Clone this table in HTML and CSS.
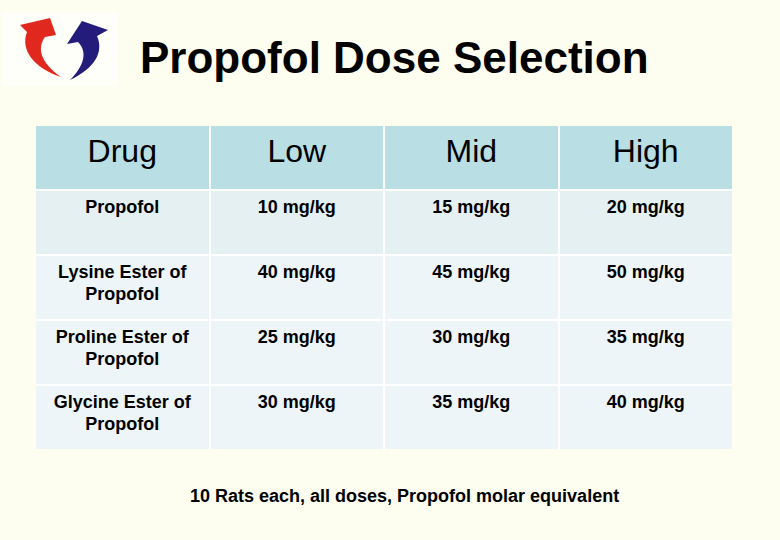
FILE: index.html
```html
<!DOCTYPE html>
<html>
<head>
<meta charset="utf-8">
<link rel="stylesheet" href="styles.css">
</head>
<body>
<div class="slide">
  <header class="top">
    <div class="logo">
      <svg width="116" height="74" viewBox="2 12 116 74">
        <path d="M50,18 L56,35 L45,37 C37,48 40,62 61,77 C34,68 20,50 27,32 L20,25 Z" fill="#e0281e"/>
        <path d="M82,21 L108,30 L97,36 C104,52 95,68 70,80 C84,66 88,52 78,42 L67,44 Z" fill="#231c7a"/>
      </svg>
    </div>
    <h1 class="title">Propofol Dose Selection</h1>
  </header>
  <div class="table">
    <div class="cell head">Drug</div>
    <div class="cell head">Low</div>
    <div class="cell head">Mid</div>
    <div class="cell head">High</div>

    <div class="cell r1">Propofol</div>
    <div class="cell r1">10 mg/kg</div>
    <div class="cell r1">15 mg/kg</div>
    <div class="cell r1">20 mg/kg</div>

    <div class="cell r2">Lysine Ester of Propofol</div>
    <div class="cell r2">40 mg/kg</div>
    <div class="cell r2">45 mg/kg</div>
    <div class="cell r2">50 mg/kg</div>

    <div class="cell r2">Proline Ester of Propofol</div>
    <div class="cell r2">25 mg/kg</div>
    <div class="cell r2">30 mg/kg</div>
    <div class="cell r2">35 mg/kg</div>

    <div class="cell r2">Glycine Ester of Propofol</div>
    <div class="cell r2">30 mg/kg</div>
    <div class="cell r2">35 mg/kg</div>
    <div class="cell r2">40 mg/kg</div>
  </div>
  <p class="note">10 Rats each, all doses, Propofol molar equivalent</p>
</div>
</body>
</html>
```
FILE: styles.css
```css
html, body {
  margin: 0;
  padding: 0;
  background: #fdfdf0;
}
.slide {
  width: 780px;
  height: 540px;
  font-family: "Liberation Sans", Arial, sans-serif;
  color: #000;
  box-sizing: border-box;
  padding-top: 12px;
}
.top {
  display: flex;
  align-items: flex-start;
  height: 114px;
}
.logo {
  margin-left: 2px;
  width: 116px;
  height: 74px;
  background: #fffffa;
}
.logo svg {
  display: block;
}
.title {
  margin: 21px 0 0 22px;
  font-size: 44px;
  font-weight: bold;
  line-height: 50px;
}
.table {
  margin-left: 36px;
  width: 696px;
  display: grid;
  grid-template-columns: repeat(4, 1fr);
  grid-auto-rows: 63px;
  gap: 2px;
  background: #ffffff;
}
.cell {
  text-align: center;
  box-sizing: border-box;
}
.head {
  background: #b9dee3;
  font-size: 32px;
  line-height: 36px;
  padding-top: 7px;
}
.r1, .r2 {
  font-size: 18px;
  font-weight: bold;
  line-height: 22px;
  padding: 5px 12px 0;
}
.r1 {
  background: #e5f0f2;
}
.r2 {
  background: #eef5f8;
}
.note {
  margin: 36px 0 0 190px;
  font-size: 18px;
  font-weight: bold;
  line-height: 22px;
}
```
